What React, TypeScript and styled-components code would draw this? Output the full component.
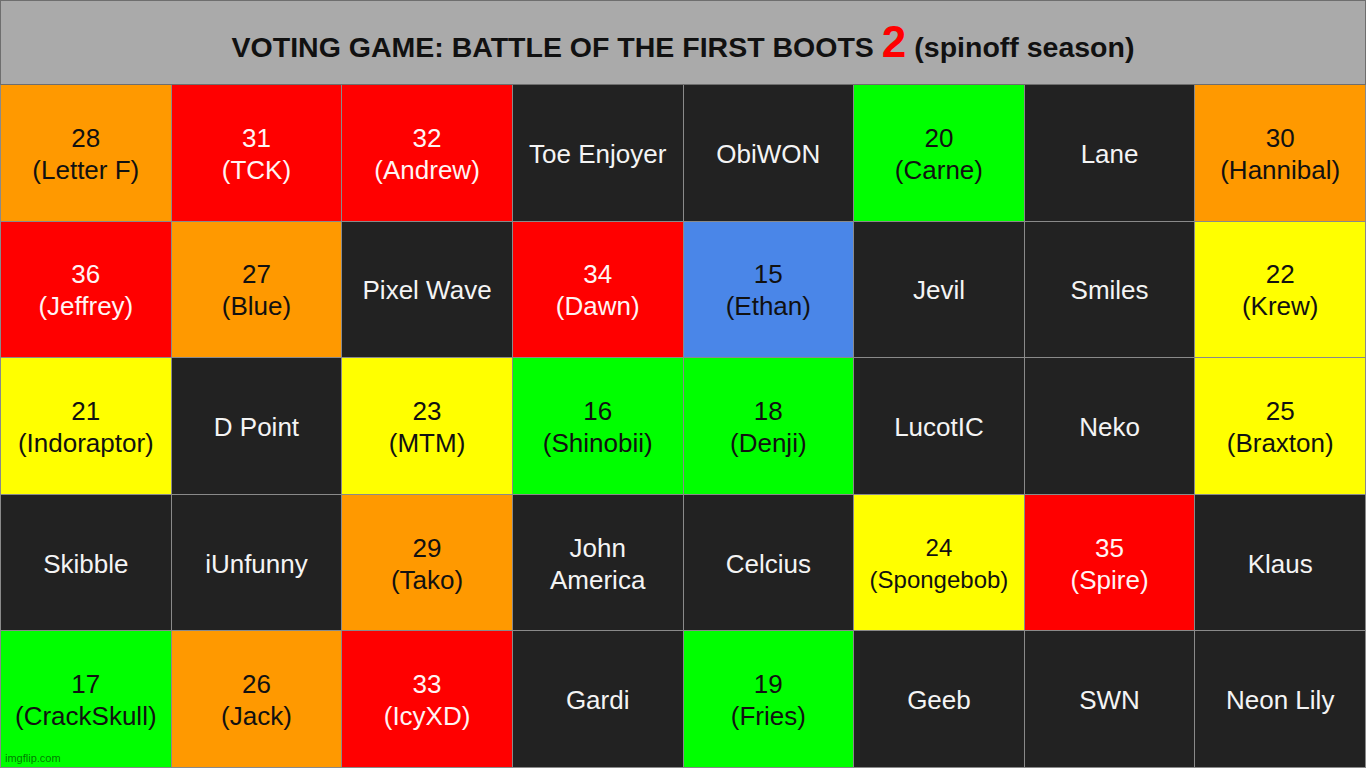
import React from 'react';
import styled, { createGlobalStyle } from 'styled-components';

type Tone = 'orange' | 'red' | 'dark' | 'green' | 'blue' | 'yellow';

interface CellSchema {
  tone: Tone;
  lines: string[];
  small?: boolean;
}

const tones: Record<Tone, { bg: string; fg: string }> = {
  orange: { bg: '#ff9900', fg: '#111111' },
  red: { bg: '#ff0000', fg: '#fff4f4' },
  dark: { bg: '#222222', fg: '#f4f4f4' },
  green: { bg: '#00ff00', fg: '#111111' },
  blue: { bg: '#4a86e8', fg: '#111111' },
  yellow: { bg: '#ffff00', fg: '#111111' },
};

const cells: CellSchema[] = [
  { tone: 'orange', lines: ['28', '(Letter F)'] },
  { tone: 'red', lines: ['31', '(TCK)'] },
  { tone: 'red', lines: ['32', '(Andrew)'] },
  { tone: 'dark', lines: ['Toe Enjoyer'] },
  { tone: 'dark', lines: ['ObiWON'] },
  { tone: 'green', lines: ['20', '(Carne)'] },
  { tone: 'dark', lines: ['Lane'] },
  { tone: 'orange', lines: ['30', '(Hannibal)'] },

  { tone: 'red', lines: ['36', '(Jeffrey)'] },
  { tone: 'orange', lines: ['27', '(Blue)'] },
  { tone: 'dark', lines: ['Pixel Wave'] },
  { tone: 'red', lines: ['34', '(Dawn)'] },
  { tone: 'blue', lines: ['15', '(Ethan)'] },
  { tone: 'dark', lines: ['Jevil'] },
  { tone: 'dark', lines: ['Smiles'] },
  { tone: 'yellow', lines: ['22', '(Krew)'] },

  { tone: 'yellow', lines: ['21', '(Indoraptor)'] },
  { tone: 'dark', lines: ['D Point'] },
  { tone: 'yellow', lines: ['23', '(MTM)'] },
  { tone: 'green', lines: ['16', '(Shinobii)'] },
  { tone: 'green', lines: ['18', '(Denji)'] },
  { tone: 'dark', lines: ['LucotIC'] },
  { tone: 'dark', lines: ['Neko'] },
  { tone: 'yellow', lines: ['25', '(Braxton)'] },

  { tone: 'dark', lines: ['Skibble'] },
  { tone: 'dark', lines: ['iUnfunny'] },
  { tone: 'orange', lines: ['29', '(Tako)'] },
  { tone: 'dark', lines: ['John', 'America'] },
  { tone: 'dark', lines: ['Celcius'] },
  { tone: 'yellow', lines: ['24', '(Spongebob)'], small: true },
  { tone: 'red', lines: ['35', '(Spire)'] },
  { tone: 'dark', lines: ['Klaus'] },

  { tone: 'green', lines: ['17', '(CrackSkull)'] },
  { tone: 'orange', lines: ['26', '(Jack)'] },
  { tone: 'red', lines: ['33', '(IcyXD)'] },
  { tone: 'dark', lines: ['Gardi'] },
  { tone: 'green', lines: ['19', '(Fries)'] },
  { tone: 'dark', lines: ['Geeb'] },
  { tone: 'dark', lines: ['SWN'] },
  { tone: 'dark', lines: ['Neon Lily'] },
];

const GlobalStyle = createGlobalStyle`
  html, body {
    margin: 0;
    padding: 0;
    background: #ffffff;
  }
  body {
    font-family: "Liberation Sans", Arial, sans-serif;
  }
`;

const BoardStyled = styled.div`
  position: relative;
  width: 1366px;
  height: 768px;
  display: flex;
  flex-direction: column;
  overflow: hidden;
`;

const HeaderStyled = styled.header`
  box-sizing: border-box;
  height: 85px;
  flex: 0 0 85px;
  background: #aaaaaa;
  border: solid 1px #6e6e6e;
  display: flex;
  align-items: center;
  justify-content: center;
  padding-bottom: 2px;
`;

const TitleStyled = styled.h1`
  margin: 0;
  font-size: 28.5px;
  font-weight: bold;
  color: #111111;
  line-height: 1;
  display: flex;
  align-items: baseline;
  gap: 8px;
`;

const BigTwoStyled = styled.span`
  color: #ff0000;
  font-size: 44px;
`;

const GridStyled = styled.div`
  flex: 1;
  display: grid;
  grid-template-columns: repeat(8, 1fr);
  grid-template-rows: repeat(5, 1fr);
  gap: 1px;
  background: #8a8a8a;
  padding: 0 1px 1px 1px;
`;

const CellStyled = styled.div<{ $tone: Tone; $small?: boolean }>`
  display: flex;
  flex-direction: column;
  align-items: center;
  justify-content: center;
  text-align: center;
  background: ${(p) => tones[p.$tone].bg};
  color: ${(p) => tones[p.$tone].fg};
  font-size: ${(p) => (p.$small ? '24px' : '26px')};
  line-height: 32px;
  padding-top: 2px;
`;

const WatermarkStyled = styled.div`
  position: absolute;
  left: 5px;
  bottom: 4px;
  font-size: 11px;
  color: rgba(0, 0, 0, 0.55);
`;

const App: React.FC = () => (
  <>
    <GlobalStyle />
    <BoardStyled>
      <HeaderStyled>
        <TitleStyled>
          <span>VOTING GAME: BATTLE OF THE FIRST BOOTS</span>
          <BigTwoStyled>2</BigTwoStyled>
          <span>(spinoff season)</span>
        </TitleStyled>
      </HeaderStyled>
      <GridStyled>
        {cells.map((cell, i) => (
          <CellStyled key={i} $tone={cell.tone} $small={cell.small}>
            {cell.lines.map((line) => (
              <span key={line}>{line}</span>
            ))}
          </CellStyled>
        ))}
      </GridStyled>
      <WatermarkStyled>imgflip.com</WatermarkStyled>
    </BoardStyled>
  </>
);

export default App;
